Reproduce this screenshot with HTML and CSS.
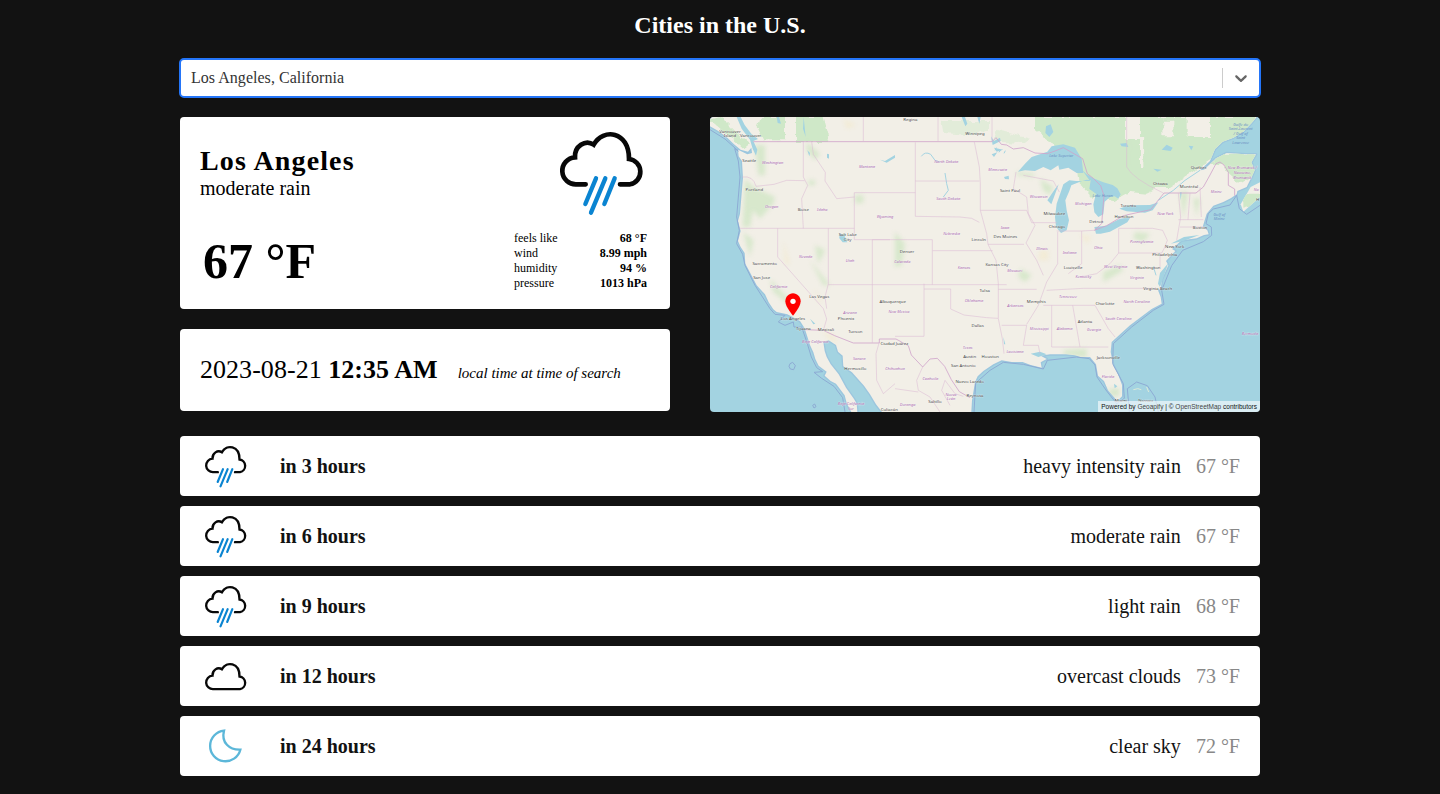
FILE: index.html
```html
<!DOCTYPE html>
<html lang="en">
<head>
<meta charset="utf-8">
<title>Cities in the U.S.</title>
<link rel="stylesheet" href="styles.css">
</head>
<body>
<svg class="defs" aria-hidden="true">
  <symbol id="rain" viewBox="26 15 300 300">
    <path class="cloud" d="M133 202H106A40 40 0 0 1 101 121C99 88 132 66 157 83C185 32 264 42 263 126A38.500 38.500 0 0 1 266 202H236"/>
    <path class="drops" d="M164 184L132 261M192 184L149 287M220 184L189 261"/>
  </symbol>
  <symbol id="clouds" viewBox="26 -27 300 300">
    <path class="cloud" d="M106 202A40 40 0 0 1 101 121C99 88 132 66 157 83C185 32 264 42 263 126A38.500 38.500 0 0 1 266 202Z"/>
  </symbol>
  <symbol id="moon" viewBox="30 225 150 150">
    <path class="moon" d="M102 254A46 46 0 1 0 151 311C118 312 93 290 102 254Z"/>
  </symbol>
</svg>
<main class="page">
  <h1 class="title">Cities in the U.S.</h1>
  <div class="select">
    <span class="select-value">Los Angeles, California</span>
    <span class="select-divider"></span>
    <svg class="select-arrow" viewBox="0 0 20 20"><path d="M4.516 7.548c0.436-0.446 1.043-0.481 1.576 0l3.908 3.747 3.908-3.747c0.533-0.481 1.141-0.446 1.574 0 0.436 0.445 0.408 1.197 0 1.615-0.406 0.418-4.695 4.502-4.695 4.502-0.217 0.223-0.502 0.335-0.787 0.335s-0.570-0.112-0.789-0.335c0 0-4.287-4.084-4.695-4.502s-0.436-1.170 0-1.615z"/></svg>
  </div>
  <div class="overview">
    <div class="left">
      <section class="card current">
        <div class="current-top">
          <div><h2 class="city">Los Angeles</h2><p class="condition">moderate rain</p></div>
          <svg class="icon-large"><use href="#rain"/></svg>
        </div>
        <div class="current-bottom">
          <p class="temp">67 °F</p>
          <dl class="details">
            <dt>feels like</dt><dd>68 °F</dd>
            <dt>wind</dt><dd>8.99 mph</dd>
            <dt>humidity</dt><dd>94 %</dd>
            <dt>pressure</dt><dd>1013 hPa</dd>
          </dl>
        </div>
      </section>
      <section class="card time">
        <p class="date">2023-08-21 <b>12:35 AM</b></p>
        <em class="note">local time at time of search</em>
      </section>
    </div>
    <div class="map">
      <svg class="map-image" viewBox="0 0 1650 885" preserveAspectRatio="none">
        <defs>
          <filter id="soft" x="-20%" y="-20%" width="140%" height="140%"><feGaussianBlur stdDeviation="7"/></filter>
          <filter id="rough" x="-5%" y="-5%" width="110%" height="110%"><feTurbulence type="fractalNoise" baseFrequency=".035" numOctaves="3" seed="4"/><feDisplacementMap in="SourceGraphic" scale="20" xChannelSelector="R" yChannelSelector="G"/></filter>
          <path id="land" d="M0 0V28L25 42L52 62L72 82L92 98L114 104L124 92L126 108L112 112L84 98L86 118L96 132L97 150L99 182L95 230L90 290L84 312L92 342L84 372L92 390L104 408L106 440L122 470L140 505L165 532L176 556L190 577L200 585L232 592L248 600L270 612L284 634L300 684L310 706L316 726L326 746L350 764L344 776L362 792L378 800L404 835L410 858L424 885H442L440 860L432 846L408 812L397 792L386 772L362 742L350 720L344 702L340 676L356 670L378 684L384 704L398 716L400 748L426 766L444 786L462 806L480 832L498 862L516 885H784L786 850L795 795L803 778L820 762L850 742L875 730L905 735L938 735L962 744L995 752L992 736L1010 726L992 716L1020 712L1068 712L1095 715L1112 720L1140 720L1158 742L1164 776L1182 792L1194 820L1222 852L1236 838L1236 804L1224 772L1210 746L1202 705L1205 675L1232 650L1260 625L1290 602L1325 576L1355 560L1352 540L1344 520L1352 516L1356 486L1375 445L1368 432L1396 402L1386 396L1415 370L1460 364L1482 354L1496 352L1492 340L1478 330L1484 310L1490 290L1510 266L1540 255L1562 244L1580 232L1582 222L1610 210L1626 178L1634 160L1624 136L1638 112H1606L1550 108L1518 124L1482 158L1470 160L1500 132L1515 96L1538 74L1570 62L1600 44L1625 18L1640 0Z"/>
          <clipPath id="land-clip"><use href="#land"/><path d="M1650 200L1620 212L1592 262L1600 284L1650 240Z"/></clipPath>
        </defs>
        <rect class="water" width="1650" height="885"/>
        <use class="halo" href="#land"/>
        <use class="ground" href="#land"/>
        <path class="ground" d="M1650 196L1622 210L1592 262L1600 284L1650 240Z"/>
        <g clip-path="url(#land-clip)">
          <g class="forest" filter="url(#rough)">
            <path d="M150 0H225V70H160L140 30ZM258 0H338L358 75H258ZM0 8L60 60L100 95L120 80L70 40L30 0Z"/>
            <path d="M975 0H1245V66H1290V150H1330V220L1310 230L1260 225L1215 250L1140 238L1110 205L1100 130L1050 90L1030 82L975 40Z"/>
            <path d="M1320 0H1360V58H1390V12H1430V60H1500V0H1650V60L1590 70L1510 125L1450 165L1380 210H1300V60H1320Z"/>
            <path d="M1290 0H1320V60H1290ZM1360 0H1430V14H1360ZM1246 66H1262V152H1292V168H1246ZM1312 60V110H1300V60ZM1530 110H1640L1640 170L1590 200L1555 170L1540 140L1500 145ZM1600 230H1650V260L1600 275Z"/>
            <path class="faint" d="M695 12H840V35L790 55L700 48ZM860 38L960 65L945 78L850 74Z"/>
          </g>
          <g class="woods" filter="url(#soft)">
            <path d="M135 85H165V175H145ZM105 185L140 220L120 330H98ZM130 210L195 240L190 260L150 305L125 275ZM290 75L330 110L315 130L290 100ZM295 190H315V205H295ZM100 345L130 370L120 420ZM315 385L345 400L325 440ZM435 235H460V258H435ZM555 345L585 380L575 445L555 450ZM300 430L360 505L340 505ZM180 485L230 540L270 565H240L190 525ZM930 455L965 475L945 495L925 480ZM990 185L1030 210L1020 235L1000 220ZM1275 345L1320 350L1300 375L1270 365ZM1180 465L1230 445L1240 460L1180 495ZM1410 225H1435L1420 305ZM1450 245H1470L1460 300ZM920 165L975 170L970 180L920 175ZM1060 700L1130 695L1130 722L1060 712ZM1195 815L1230 815L1225 840L1200 835Z"/>
          </g>
          <g class="sand" filter="url(#soft)"><path d="M335 640L370 655L385 680L360 670ZM310 515L335 550L328 558ZM1110 350L1145 360L1130 380ZM990 400H1015V430H985ZM220 370L240 440H225ZM400 5L440 25L410 35Z"/></g>
        </g>
        <g class="lake">
          <path d="M80 0L95 35L120 68L128 95L138 116L142 98L130 72L144 66L124 50L104 24L92 0ZM200 0H207L213 20L203 18ZM281 0L287 60L279 35Z"/>
          <path d="M388 350L402 352L412 376L398 376L388 364ZM510 128L525 132L555 114V122L530 137ZM351 110L357 112V125L351 122ZM292 100L300 108L298 118Z"/>
          <path d="M755 0L765 0L772 20L766 28ZM802 0H812L808 20ZM843 58L852 72L870 62L872 72L848 84ZM852 92L880 98L860 104ZM845 112L862 106L852 120ZM882 180L896 176L897 187L885 186ZM1008 28L1022 22L1030 45L1018 60L1006 48Z"/>
          <path d="M924 164L945 140L965 120L1012 104L1025 88L1060 82L1095 92L1115 125L1120 168L1100 168L1075 152L1048 158L1045 145L1022 160L1000 150L975 162L945 160Z"/>
          <path d="M1116 158L1135 185L1140 192H1098L1078 190L1060 202L1052 226L1040 260L1035 300L1038 330L1053 348L1070 340L1077 310L1070 280L1066 250L1078 222L1084 205L1110 194L1130 188L1142 190L1138 216L1158 230L1150 262L1153 286L1165 300L1180 292L1184 254L1200 240L1214 238L1225 245L1232 232L1222 214L1208 204L1180 196L1150 184L1130 172Z"/>
          <path d="M1024 262L1012 250L1035 216L1046 202L1032 240ZM1153 330L1188 326L1230 305L1262 300L1252 316L1200 344L1172 350L1158 350ZM1228 275L1255 265L1320 264L1345 256L1328 280L1305 287L1250 283ZM1410 226L1415 226L1412 250ZM1355 98L1370 83L1388 92L1382 102ZM1436 86L1450 88L1444 100ZM1330 155L1355 158L1342 164ZM1230 80L1250 78L1255 90L1235 88Z"/>
          <path d="M1375 438L1350 468L1344 500L1350 510L1358 488ZM1382 380L1422 360L1468 354L1420 372ZM300 605L316 620L310 622ZM1212 800L1222 808L1214 814ZM880 660L886 682L882 682ZM985 720L962 710L990 704L1010 712Z"/>
          <path class="river" d="M634 118Q645 102 662 112L675 130L690 135M705 168L710 200L715 220L700 240M1470 160L1425 190L1390 220L1345 250M1330 448L1338 475M855 100l4-8m8 14l5-7m10 10l4-8"/>
        </g>
        <path class="border strong" d="M130 74H846L858 62L874 82L890 84L910 96L940 92L975 108L1012 110L1035 102L1060 92L1118 125L1132 170L1150 184L1172 206L1182 236L1175 320L1153 340L1190 326L1240 296L1322 278L1362 228H1458L1480 210L1500 174L1518 140L1530 135L1542 144L1555 166V205L1574 216V236M284 638L340 640L374 656L430 678H508V666H558L595 686L604 714L638 750L660 726L682 724L704 748L724 788L748 824L780 842"/>
        <path class="border" d="M96 180Q130 175 138 208L192 202L230 190L284 191M280 74V180L293 205L275 245L280 334M305 74L310 112L346 166L345 192L380 245L433 240M433 227V368H540M433 227H616M616 76V298L750 300L785 304L808 316M86 334H433M203 334V420L340 575L350 606L340 640M355 334V500L345 540L350 575M487 368V678M355 503H890M487 368H667V435V503M668 401H848M793 75L808 150L811 200V280H950M616 192H808M811 280L830 350L834 382H942M834 382L858 430L865 500V605L877 665L882 710M642 500V658H555M642 516H722V576L762 594L830 602L864 604M875 625H950L940 685H985L990 710M950 280L965 317H1040M950 240L955 290L975 325L948 378L980 430L1000 475M950 240L910 215L918 165M940 175L1030 192L1048 225M1043 345V440L1010 495L985 565L950 622M1040 342H1115M1115 342V440L1075 470M1115 342L1153 340M1226 335V408H1355L1362 395L1372 370L1358 340L1328 334H1226M1226 408L1200 440L1160 470L1110 480M1010 520L1120 514H1330M1000 565H1155L1195 635L1215 660M1025 565V690M1088 565L1110 690M1025 690H1195M865 517H980M1405 228L1412 300L1400 370M1440 228L1434 308M1470 210L1474 300M1405 308H1480M1410 330H1485M1350 408V450M1250 150V110V0M1250 150Q1268 185 1360 228M460 0V72M684 0V74M846 0V74M508 675L498 710L500 790L520 830L555 800M638 750L620 790L625 820L660 840L690 885M705 790L735 830L760 838M705 790L695 820L720 865M555 815L625 825"/>
        <path class="sea-line" d="M0 38L45 66L85 102L74 95L85 132L90 180L80 300L88 340L80 380L98 412L105 445L135 505L180 575L195 592L225 595L205 615L225 625L250 615L252 630L275 630L292 680L304 720L320 752L338 764L312 766L335 784L372 808L398 842L405 885M240 740l8-4 8 10-5 12-10-2-4-8zM308 865l6-4 4 8-6 4zM792 885L797 798L840 760L880 736L940 742L1000 756L1012 730L1100 720L1138 725L1155 744L1161 780L1190 822L1220 860L1243 844L1240 800L1208 740L1210 680L1265 630L1330 580L1362 562L1355 520L1385 446L1418 400L1480 374L1505 355L1504 330L1488 320L1495 290L1510 276L1560 264L1580 235L1588 275L1610 292L1650 265M1258 885L1252 815L1280 795L1312 806L1335 840L1345 885"/>
        <path class="island" d="M1270 818Q1285 812 1294 818M1310 810L1316 825"/>
        <g class="label city-label">
          <text x="60" y="47">Vancouver</text><text x="60" y="60">Island</text><text x="122" y="61">Vancouver</text><text x="118" y="135">Seattle</text><text x="133" y="222">Portland</text><text x="280" y="281">Boise</text><text x="413" y="357">Salt Lake</text><text x="413" y="372">City</text><text x="164" y="445">Sacramento</text><text x="155" y="486">San Jose</text><text x="328" y="542">Las Vegas</text><text x="249" y="610">Los Angeles</text><text x="280" y="638">Tijuana</text><text x="348" y="643">Mexicali</text><text x="408" y="609">Phoenix</text><text x="436" y="647">Tucson</text><text x="548" y="557">Albuquerque</text><text x="553" y="683">Ciudad Juárez</text><text x="436" y="760">Hermosillo</text><text x="538" y="882">Culiacán</text>
          <text x="601" y="13">Regina</text><text x="795" y="54">Winnipeg</text><text x="900" y="225">Saint Paul</text><text x="1033" y="294">Milwaukee</text><text x="1041" y="334">Chicago</text><text x="806" y="371">Lincoln</text><text x="886" y="362">Des Moines</text><text x="591" y="407">Denver</text><text x="861" y="447">Kansas City</text><text x="824" y="525">Tulsa</text><text x="803" y="630">Dallas</text><text x="779" y="724">Austin</text><text x="841" y="722">Houston</text><text x="760" y="750">San Antonio</text><text x="779" y="799">Nuevo Laredo</text><text x="795" y="840">Reynosa</text><text x="675" y="858">Saltillo</text><text x="979" y="558">Memphis</text><text x="1089" y="456">Louisville</text>
          <text x="1159" y="319">Detroit</text><text x="1242" y="303">Hamilton</text><text x="1255" y="271">Toronto</text><text x="1351" y="205">Ottawa</text><text x="1437" y="213">Montréal</text><text x="1466" y="155">Québec</text><text x="1470" y="335">Boston</text><text x="1394" y="392">New York</text><text x="1364" y="418">Philadelphia</text><text x="1315" y="455">Washington</text><text x="1343" y="520">Virginia Beach</text><text x="1185" y="563">Charlotte</text><text x="1125" y="618">Atlanta</text><text x="1195" y="725">Jacksonville</text><text x="1233" y="855">Miami</text><text x="1307" y="855">Nassau</text><text x="1643" y="252">H</text>
        </g>
        <g class="label state-label">
          <text x="188" y="141">Washington</text><text x="185" y="273">Oregon</text><text x="337" y="282">Idaho</text><text x="471" y="154">Montana</text><text x="525" y="303">Wyoming</text><text x="287" y="423">Nevada</text><text x="420" y="434">Utah</text><text x="206" y="512">California</text><text x="420" y="591">Arizona</text><text x="567" y="587">New Mexico</text><text x="316" y="677">Baja California</text><text x="448" y="730">Sonora</text><text x="555" y="760">Chihuahua</text><text x="423" y="865">Baja California</text><text x="423" y="879">Sur</text><text x="577" y="439">Colorado</text>
          <text x="709" y="138">North Dakota</text><text x="715" y="250">South Dakota</text><text x="863" y="163">Minnesota</text><text x="986" y="243">Wisconsin</text><text x="725" y="355">Nebraska</text><text x="885" y="336">Iowa</text><text x="996" y="400">Illinois</text><text x="1079" y="410">Indiana</text><text x="762" y="457">Kansas</text><text x="914" y="464">Missouri</text><text x="792" y="554">Oklahoma</text><text x="916" y="569">Arkansas</text><text x="1074" y="543">Tennessee</text><text x="988" y="639">Mississippi</text><text x="1064" y="640">Alabama</text><text x="915" y="709">Louisiana</text><text x="773" y="696">Texas</text><text x="661" y="790">Coahuila</text><text x="723" y="837">Nuevo</text><text x="723" y="850">León</text><text x="593" y="868">Durango</text>
          <text x="1120" y="265">Michigan</text><text x="1165" y="396">Ohio</text><text x="1120" y="483">Kentucky</text><text x="1217" y="454">West Virginia</text><text x="1281" y="486">Virginia</text><text x="1280" y="557">North Carolina</text><text x="1225" y="608">South Carolina</text><text x="1152" y="641">Georgia</text><text x="1194" y="782">Florida</text><text x="1295" y="377">Pennsylvania</text><text x="1366" y="294">New York</text><text x="1519" y="228">Maine</text><text x="1597" y="157">New Brunswick /</text><text x="1597" y="171">Nouveau-</text><text x="1597" y="185">Brunswick</text><text x="1639" y="223">No</text><text x="1620" y="653">Bermuda</text>
        </g>
        <g class="label water-label">
          <text x="1054" y="119">Lake Superior</text><text x="1178" y="240">Lake Huron</text><text x="1528" y="297">Gulf of</text><text x="1528" y="310">Maine</text><text x="1592" y="27">Golfe du</text><text x="1592" y="40">Saint-Laurent</text><text x="1592" y="53">/ Gulf of</text><text x="1592" y="67">Saint</text><text x="1592" y="80">Lawrence</text>
        </g>
        <path class="pin" d="M249 529C236 529 226 540 226 553C226 570 249 596 249 596S272 570 272 553C272 540 262 529 249 529Z"/>
        <circle class="pin-dot" cx="249" cy="553" r="8"/>
      </svg>
      <div class="attribution">Powered by <span>Geoapify</span> | © <span>OpenStreetMap</span> contributors</div>
    </div>
  </div>
  <div class="forecast">
    <div class="card row"><svg class="icon"><use href="#rain"/></svg><b class="when">in 3 hours</b><span class="sky">heavy intensity rain</span><span class="deg">67 °F</span></div>
    <div class="card row"><svg class="icon"><use href="#rain"/></svg><b class="when">in 6 hours</b><span class="sky">moderate rain</span><span class="deg">67 °F</span></div>
    <div class="card row"><svg class="icon"><use href="#rain"/></svg><b class="when">in 9 hours</b><span class="sky">light rain</span><span class="deg">68 °F</span></div>
    <div class="card row"><svg class="icon"><use href="#clouds"/></svg><b class="when">in 12 hours</b><span class="sky">overcast clouds</span><span class="deg">73 °F</span></div>
    <div class="card row"><svg class="icon"><use href="#moon"/></svg><b class="when">in 24 hours</b><span class="sky">clear sky</span><span class="deg">72 °F</span></div>
  </div>
</main>
</body>
</html>
```
FILE: styles.css
```css
* { box-sizing: border-box; margin: 0; padding: 0; }
body { background: #121212; color: #000; font-family: "Liberation Serif", serif; height: 794px; overflow: hidden; }
.defs { position: absolute; width: 0; height: 0; }
.page { width: 1080px; margin: 0 auto; padding-top: 11px; }
.title { color: #fff; font-size: 24px; line-height: 28px; text-align: center; }
.select { display: flex; align-items: center; height: 40px; margin: 19px -1px 0; background: #fff; border: 2px solid #2475f8; border-radius: 5px; padding-left: 10px; color: #333; font-size: 16px; }
.select-value { flex: 1; letter-spacing: .03px; }
.select-divider { width: 1px; height: 20px; background: #ccc; }
.select-arrow { width: 20px; height: 20px; margin: 0 8px; fill: #666; }
.overview { display: flex; gap: 40px; margin-top: 19px; height: 295px; }
.left { width: 490px; display: flex; flex-direction: column; gap: 20px; }
.card { background: #fff; border-radius: 4px; }
.current { height: 192px; padding: 5px 20px 0; }
.current-top { display: flex; justify-content: space-between; height: 105px; }
.city { font-size: 28px; letter-spacing: 1.12px; line-height: 32px; margin-top: 23px; }
.condition { font-size: 20px; line-height: 22px; }
.icon-large { width: 100px; height: 100px; }
.current-bottom { display: flex; justify-content: space-between; padding: 4px 3px 0; }
.temp { font-size: 50px; font-weight: bold; line-height: 60px; }
.details { display: grid; grid-template-columns: auto auto; width: 133px; font-size: 12px; line-height: 15px; }
.details dd { text-align: right; font-weight: bold; }
.time { height: 82px; padding: 0 20px; display: flex; align-items: baseline; gap: 20px; line-height: 82px; }
.date { font-size: 26px; letter-spacing: .04px; }
.note { font-size: 15px; }
.map { position: relative; width: 550px; height: 295px; border-radius: 4px; overflow: hidden; }
.map-image { display: block; width: 100%; height: 100%; }
.attribution { position: absolute; right: 0; bottom: 0; height: 11px; padding: 0 3px; background: rgba(255,255,255,.6); color: #111; font: 6.5px/11px "Liberation Sans", sans-serif; white-space: nowrap; }
.attribution span { color: #444; }
.water, .lake path { fill: #a3d3e1; }
.ground { fill: #f2efe7; }
.halo { fill: none; stroke: #9cc6de; stroke-width: 8; stroke-linejoin: round; }
.forest { fill: #cfe8c8; }
.forest .faint { opacity: .45; }
.woods { fill: #c9e4bd; opacity: .65; }
.sand { fill: #f4e7bd; opacity: .4; }
.lake .river { fill: none; stroke: #a3d3e1; stroke-width: 3; }
.border { fill: none; stroke: #dcb9d4; stroke-width: 2; stroke-linejoin: round; opacity: .8; }
.border.strong { stroke: #d0a2cb; stroke-width: 3; }
.sea-line { fill: none; stroke: #8dabd4; stroke-width: 3; stroke-linejoin: round; }
.island { fill: none; stroke: #dcebd9; stroke-width: 3; }
.label { font-family: "Noto Sans", sans-serif; font-size: 13px; text-anchor: middle; paint-order: stroke; stroke: rgba(255,255,255,.5); stroke-width: 2px; }
.city-label { fill: #444; }
.state-label { fill: #a868ae; font-style: italic; font-size: 12px; }
.water-label { fill: #6c8fc4; font-style: italic; font-size: 12px; stroke: none; }
.pin { fill: #f00; }
.pin-dot { fill: #fff; }
.cloud, .drops, .moon { fill: none; stroke-linecap: round; }
.cloud { stroke: #080808; stroke-width: 14; }
.drops { stroke: #0a84d1; stroke-width: 13; }
.moon { stroke: #5cb7d9; stroke-width: 7; stroke-linejoin: miter; }
.forecast { display: grid; gap: 10px; margin-top: 24px; }
.row { display: flex; align-items: center; height: 60px; padding: 0 20px; font-size: 20px; line-height: 24px; color: #121212; }
.icon { width: 50px; height: 50px; }
.when { margin-left: 30px; flex: 1; }
.when, .sky, .deg { padding-bottom: 1px; }
.deg { color: #888; margin-left: 15px; }
```
